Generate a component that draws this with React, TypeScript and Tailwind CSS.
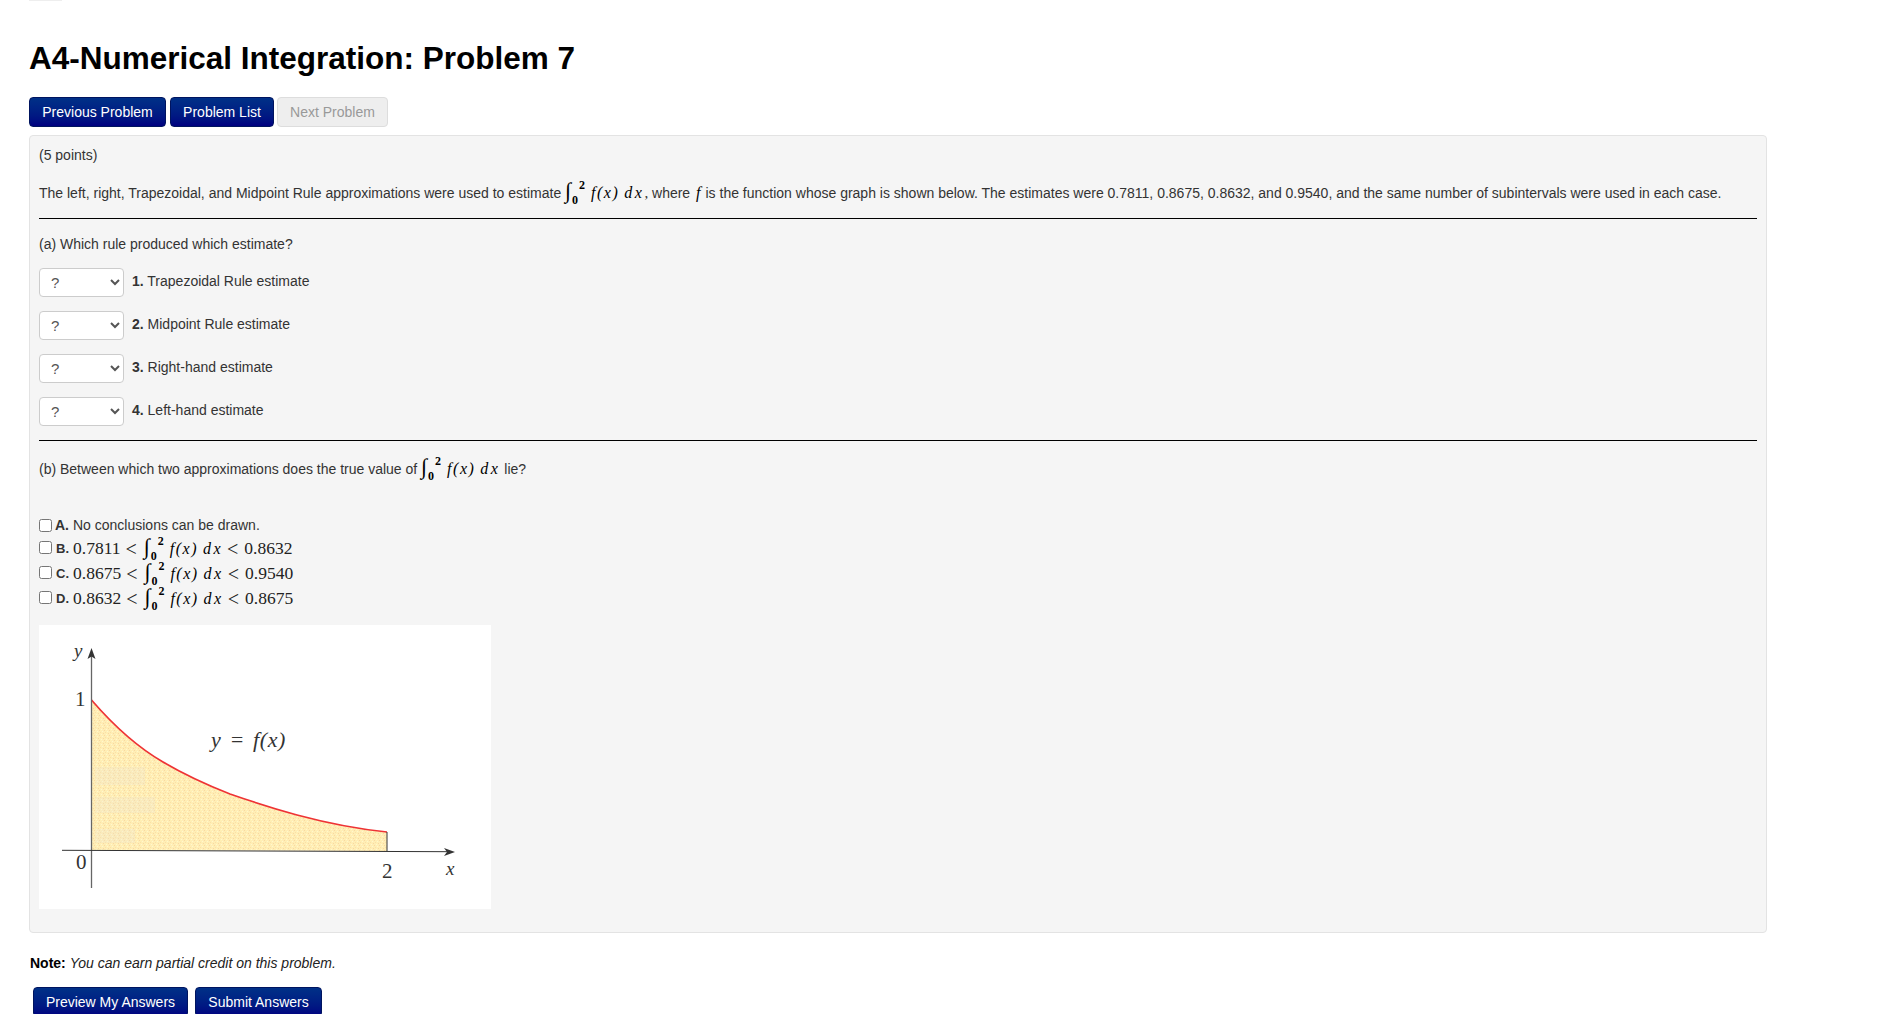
// WeBWorK problem page: header, nav buttons, problem panel, answer buttons.

function Integral() {
  return (
    <span className="inline-flex h-[28px] items-center font-['Liberation_Serif',serif] text-black">
      <span className="relative block h-[28px] w-[26px]">
        <span className="absolute left-0 top-[-2px] text-[22px] leading-[28px] italic">∫</span>
        <span className="absolute left-[14px] top-0 text-[12px] leading-[12px] font-bold">2</span>
        <span className="absolute left-[7px] top-[15px] text-[12px] leading-[12px] font-bold">0</span>
      </span>
      <span className="text-[16px] italic font-medium tracking-[1.5px]">f(x)</span>
      <span className="ml-[5px] text-[16px] italic font-medium tracking-[2.5px]">dx</span>
    </span>
  )
}

function Btn({ label, className }: { label: string; className: string }) {
  return (
    <button
      className={`h-[30px] rounded-[4px] border border-[#00145f] bg-gradient-to-b from-[#003087] to-[#000080] text-center text-[14px] text-white ${className}`}
    >
      {label}
    </button>
  )
}

function RuleRow({ num, text }: { num: string; text: string }) {
  return (
    <div className="flex h-[29px] items-start gap-[8px]">
      <select className="h-[29px] w-[85px] rounded-[4px] border border-[#cccccc] bg-white pl-[7px] text-[15px] text-[#555]">
        <option>?</option>
      </select>
      <span className="leading-[26px]">
        <b className="font-bold">{num}</b> {text}
      </span>
    </div>
  )
}

function MathOption({ letter, low, high }: { letter: string; low: string; high: string }) {
  return (
    <div className="flex h-[25px] items-center font-['Liberation_Serif',serif] text-[17.5px] text-[#222]">
      <input type="checkbox" className="m-0 mr-[4px] h-[13px] w-[13px] -translate-y-[1px]" />
      <b className="font-['Liberation_Sans',sans-serif] text-[13px] font-bold text-[#333]">{letter}</b>
      <span className="ml-[4px]">{low}</span>
      <span className="ml-[5px] text-[20px] leading-none">&lt;</span>
      <span className="ml-[7px] flex items-center"><Integral /></span>
      <span className="ml-[4px] text-[20px] leading-none">&lt;</span>
      <span className="ml-[6px]">{high}</span>
    </div>
  )
}

function Graph() {
  const area = 'M52.5 75 C 75 101 98 122 124 137 C 146 150 168 160 191 169 C 214 177 236 184 258 190 C 288 198 318 204 348 207'
  return (
    <svg width="452" height="284" viewBox="0 0 452 284" className="block bg-white">
      <defs>
        <pattern id="stipple" width="5" height="5" patternUnits="userSpaceOnUse">
          <rect width="5" height="5" fill="#ffeeb4" />
          <rect x="0" y="0" width="1" height="1" fill="#f8d6a4" />
          <rect x="3" y="1" width="1" height="1" fill="#fff6d0" />
          <rect x="1" y="2" width="1" height="1" fill="#fadfa8" />
          <rect x="4" y="3" width="1" height="1" fill="#f8d6a4" />
          <rect x="2" y="4" width="1" height="1" fill="#fff6d0" />
        </pattern>
      </defs>
      <path d={`${area} L348 226 L52.5 225 Z`} fill="url(#stipple)" />
      {/* paler patches from the scan */}
      <g fill="#ece6d4" opacity="0.25">
        <rect x="56" y="142" width="50" height="18" />
        <rect x="56" y="172" width="60" height="16" />
        <rect x="56" y="204" width="40" height="14" />
      </g>
      <path d={area} fill="none" stroke="#ee3335" strokeWidth="1.7" />
      <path d="M348 207 V226" stroke="#333" strokeWidth="1" />
      <path d="M52.5 30 V263" stroke="#666" strokeWidth="1.3" />
      <path d="M23 225.3 L410 226.7" stroke="#333" strokeWidth="1" />
      <path d="M52.5 23 L48.5 34 L52.5 31.5 L56.5 34 Z" fill="#333" />
      <path d="M416 227 L405 223 L408 227 L405 231 Z" fill="#333" />
      <g fill="#333" fontFamily="'Liberation Serif', serif">
        <text x="35" y="32" fontSize="19" fontStyle="italic">y</text>
        <text x="36" y="81" fontSize="21">1</text>
        <text x="37" y="244" fontSize="21">0</text>
        <text x="343" y="253" fontSize="21">2</text>
        <text x="407" y="250" fontSize="19" fontStyle="italic">x</text>
        <text x="172" y="122" fontSize="22" fontStyle="italic" letterSpacing="0.6" wordSpacing="2">y = f(x)</text>
      </g>
    </svg>
  )
}

export default function App() {
  return (
    <div className="h-[1014px] overflow-hidden bg-white text-[14px] text-[#333] font-['Liberation_Sans',Arial,sans-serif]">
      <div className="ml-[29px] h-px w-[33px] bg-[#eeeeee]" />

      <div className="px-[29px]">
        <h1 className="mt-[37px] h-[40px] text-[31.5px] leading-[40px] font-bold text-black">
          A4-Numerical Integration: Problem 7
        </h1>

        <div className="mt-[19px] flex gap-[3px]">
          <Btn label="Previous Problem" className="mr-px w-[137px]" />
          <Btn label="Problem List" className="w-[104px]" />
          <button className="h-[30px] w-[111px] rounded-[4px] border border-[#dddddd] bg-[#eeeeee] text-[14px] text-[#999999]">
            Next Problem
          </button>
        </div>

        {/* Problem panel */}
        <div className="mt-[8px] w-[1738px] rounded-[4px] border border-[#e3e3e3] bg-[#f5f5f5] px-[9px] pt-[9px] pb-[23px]">
          <p className="h-[20px] leading-[20px]">(5 points)</p>

          <p className="mt-[14px] flex h-[28px] items-center whitespace-pre">
            The left, right, Trapezoidal, and Midpoint Rule approximations were used to estimate <Integral />
            <span className="font-['Liberation_Serif',serif] text-[15px]">,</span> where{' '}
            <i className="ml-[2px] mr-[5px] font-['Liberation_Serif',serif] text-[16px] font-medium text-black">f</i>{' '}is the function whose graph is shown below. The estimates were 0.7811, 0.8675, 0.8632, and 0.9540, and the same number of subintervals were used in each case.
          </p>
          <hr className="mt-[11px] border-0 border-t border-black" />

          <p className="mt-[15px] h-[20px] leading-[20px]">(a) Which rule produced which estimate?</p>

          <div className="mt-[14px] flex flex-col gap-[14px]">
            <RuleRow num="1." text="Trapezoidal Rule estimate" />
            <RuleRow num="2." text="Midpoint Rule estimate" />
            <RuleRow num="3." text="Right-hand estimate" />
            <RuleRow num="4." text="Left-hand estimate" />
          </div>
          <hr className="mt-[14px] border-0 border-t border-black" />

          <p className="mt-[14px] flex h-[28px] items-center whitespace-pre">
            (b) Between which two approximations does the true value of <Integral /> lie?
          </p>

          <div className="mt-[32px] flex h-[20px] items-center">
            <input type="checkbox" className="m-0 mr-[3px] h-[13px] w-[13px]" />
            <b className="font-bold">A.</b>
            <span className="ml-[4px]">No conclusions can be drawn.</span>
          </div>
          <div className="mt-[1px]">
            <MathOption letter="B." low="0.7811" high="0.8632" />
            <MathOption letter="C." low="0.8675" high="0.9540" />
            <MathOption letter="D." low="0.8632" high="0.8675" />
          </div>

          <div className="mt-[14px]">
            <Graph />
          </div>
        </div>

        <p className="mt-[20px] ml-[1px] h-[20px] leading-[20px] text-black">
          <b className="font-bold">Note:</b> <i className="text-[#222]">You can earn partial credit on this problem.</i>
        </p>

        <div className="mt-[14px] ml-[4px] flex gap-[7px]">
          <Btn label="Preview My Answers" className="w-[155px]" />
          <Btn label="Submit Answers" className="w-[127px]" />
        </div>
      </div>
    </div>
  )
}
